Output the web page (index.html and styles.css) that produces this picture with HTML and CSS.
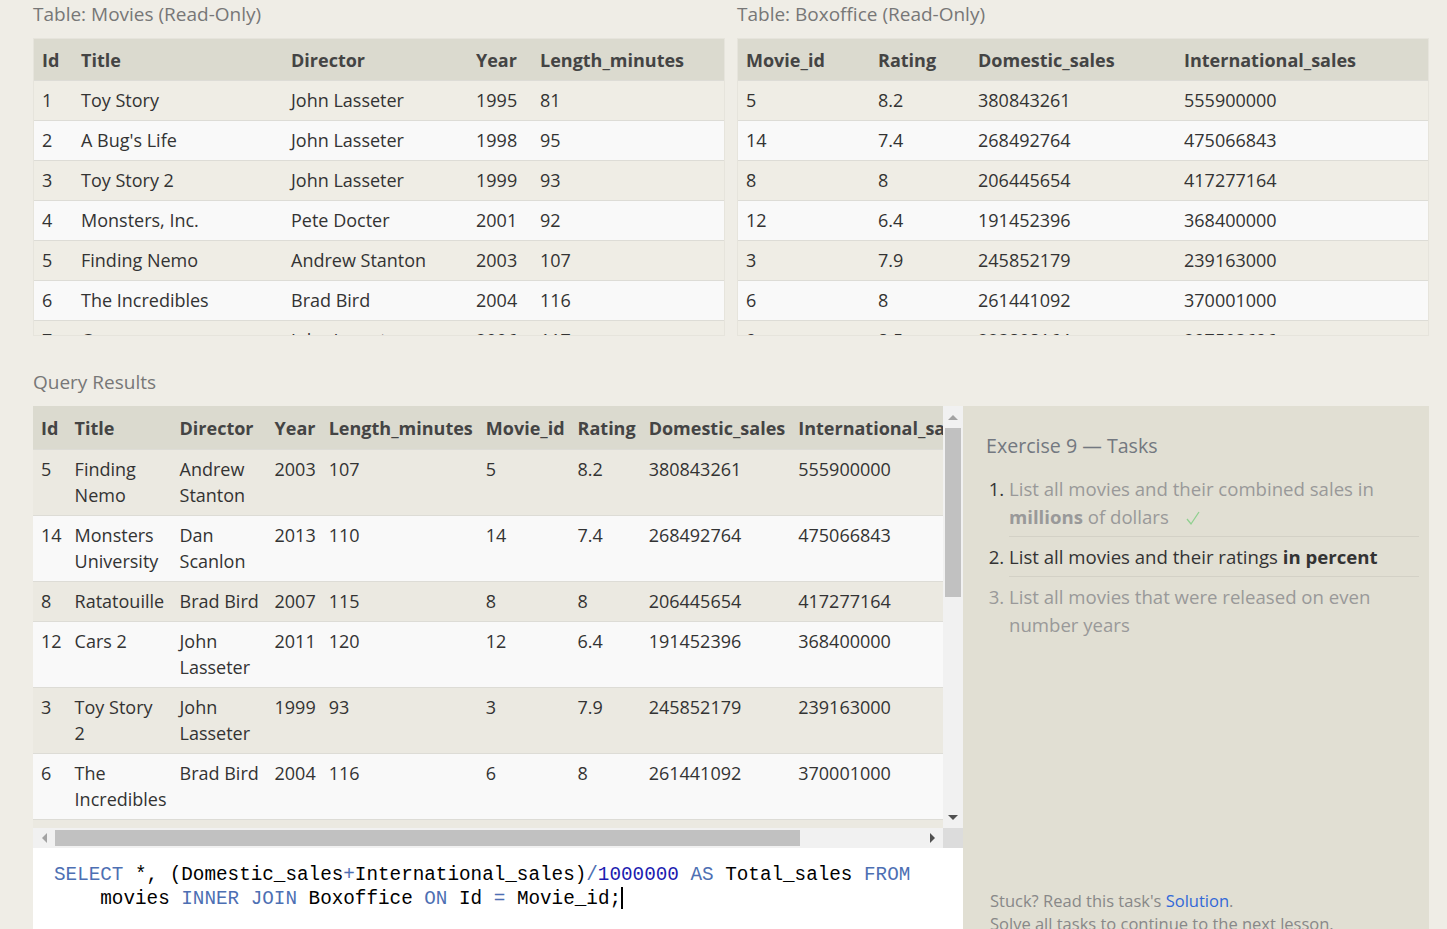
FILE: index.html
```html
<!DOCTYPE html>
<html>
<head>
<meta charset="utf-8">
<link rel="stylesheet" href="styles.css">
</head>
<body>
<div class="page">
  <div class="top">
    <section class="tbl-section">
      <div class="label">Table: Movies (Read-Only)</div>
      <div class="table-box">
        <table class="data fixed">
          <thead><tr><th class="c-id">Id</th><th class="c-title">Title</th><th class="c-dir">Director</th><th class="c-year">Year</th><th>Length_minutes</th></tr></thead>
          <tbody>
            <tr><td>1</td><td>Toy Story</td><td>John Lasseter</td><td>1995</td><td>81</td></tr>
            <tr><td>2</td><td>A Bug's Life</td><td>John Lasseter</td><td>1998</td><td>95</td></tr>
            <tr><td>3</td><td>Toy Story 2</td><td>John Lasseter</td><td>1999</td><td>93</td></tr>
            <tr><td>4</td><td>Monsters, Inc.</td><td>Pete Docter</td><td>2001</td><td>92</td></tr>
            <tr><td>5</td><td>Finding Nemo</td><td>Andrew Stanton</td><td>2003</td><td>107</td></tr>
            <tr><td>6</td><td>The Incredibles</td><td>Brad Bird</td><td>2004</td><td>116</td></tr>
            <tr><td>7</td><td>Cars</td><td>John Lasseter</td><td>2006</td><td>117</td></tr>
            <tr><td>8</td><td>Ratatouille</td><td>Brad Bird</td><td>2007</td><td>115</td></tr>
          </tbody>
        </table>
      </div>
    </section>
    <section class="tbl-section">
      <div class="label">Table: Boxoffice (Read-Only)</div>
      <div class="table-box">
        <table class="data fixed">
          <thead><tr><th class="c-mid">Movie_id</th><th class="c-rating">Rating</th><th class="c-dom">Domestic_sales</th><th>International_sales</th></tr></thead>
          <tbody>
            <tr><td>5</td><td>8.2</td><td>380843261</td><td>555900000</td></tr>
            <tr><td>14</td><td>7.4</td><td>268492764</td><td>475066843</td></tr>
            <tr><td>8</td><td>8</td><td>206445654</td><td>417277164</td></tr>
            <tr><td>12</td><td>6.4</td><td>191452396</td><td>368400000</td></tr>
            <tr><td>3</td><td>7.9</td><td>245852179</td><td>239163000</td></tr>
            <tr><td>6</td><td>8</td><td>261441092</td><td>370001000</td></tr>
            <tr><td>9</td><td>8.5</td><td>223808164</td><td>297503696</td></tr>
            <tr><td>11</td><td>8.4</td><td>415004880</td><td>648167031</td></tr>
          </tbody>
        </table>
      </div>
    </section>
  </div>

  <div class="label query-label">Query Results</div>

  <div class="bottom">
    <div class="results-col">
      <div class="results-grid">
        <div class="viewport">
          <table class="data results">
            <thead><tr><th>Id</th><th>Title</th><th class="r-dir">Director</th><th>Year</th><th>Length_minutes</th><th>Movie_id</th><th>Rating</th><th>Domestic_sales</th><th>International_sales</th><th>Total_sales</th></tr></thead>
            <tbody>
              <tr><td>5</td><td>Finding Nemo</td><td>Andrew Stanton</td><td>2003</td><td>107</td><td>5</td><td>8.2</td><td>380843261</td><td>555900000</td><td>936</td></tr>
              <tr><td>14</td><td>Monsters University</td><td>Dan Scanlon</td><td>2013</td><td>110</td><td>14</td><td>7.4</td><td>268492764</td><td>475066843</td><td>743</td></tr>
              <tr><td>8</td><td>Ratatouille</td><td>Brad Bird</td><td>2007</td><td>115</td><td>8</td><td>8</td><td>206445654</td><td>417277164</td><td>623</td></tr>
              <tr><td>12</td><td>Cars 2</td><td>John Lasseter</td><td>2011</td><td>120</td><td>12</td><td>6.4</td><td>191452396</td><td>368400000</td><td>559</td></tr>
              <tr><td>3</td><td>Toy Story 2</td><td>John Lasseter</td><td>1999</td><td>93</td><td>3</td><td>7.9</td><td>245852179</td><td>239163000</td><td>485</td></tr>
              <tr><td>6</td><td>The Incredibles</td><td>Brad Bird</td><td>2004</td><td>116</td><td>6</td><td>8</td><td>261441092</td><td>370001000</td><td>631</td></tr>
              <tr><td>9</td><td>WALL-E</td><td>Andrew Stanton</td><td>2008</td><td>104</td><td>9</td><td>8.5</td><td>223808164</td><td>297503696</td><td>521</td></tr>
              <tr><td>11</td><td>Toy Story 3</td><td>Lee Unkrich</td><td>2010</td><td>103</td><td>11</td><td>8.4</td><td>415004880</td><td>648167031</td><td>1063</td></tr>
            </tbody>
          </table>
        </div>
        <div class="vbar">
          <div class="sb-btn"><span class="tri tri-up"></span></div>
          <div class="vtrack"><div class="vthumb"></div></div>
          <div class="sb-btn"><span class="tri tri-down"></span></div>
        </div>
        <div class="hbar">
          <div class="sb-btn h"><span class="tri tri-left"></span></div>
          <div class="htrack"><div class="hthumb"></div></div>
          <div class="sb-btn h"><span class="tri tri-right"></span></div>
        </div>
        <div class="corner"></div>
      </div>
      <div class="editor"><pre class="code"><span class="kw">SELECT</span> *, (Domestic_sales<span class="op">+</span>International_sales)<span class="op">/</span><span class="num">1000000</span> <span class="kw">AS</span> Total_sales <span class="kw">FROM</span>
    movies <span class="kw">INNER</span> <span class="kw">JOIN</span> Boxoffice <span class="kw">ON</span> Id <span class="op">=</span> Movie_id;<span class="cursor"></span></pre></div>
    </div>

    <aside class="tasks">
      <h2 class="tasks-title">Exercise 9 — Tasks</h2>
      <ol class="task-list">
        <li class="done"><span class="txt">List all movies and their combined sales in <b>millions</b> of dollars</span><svg class="check" width="16" height="16" viewBox="0 0 16 16"><polyline points="2,9 6,14 14,2" fill="none" stroke="#8fd08f" stroke-width="1.3"/></svg></li>
        <li class="current">List all movies and their ratings <b>in percent</b></li>
        <li class="todo">List all movies that were released on even number years</li>
      </ol>
      <div class="tasks-foot">
        <div>Stuck? Read this task's <a class="sol">Solution</a>.</div>
        <div>Solve all tasks to continue to the next lesson.</div>
      </div>
    </aside>
  </div>
</div>
</body>
</html>
```

FILE: styles.css
```css
html, body {
  margin: 0;
  padding: 0;
  background: #efede6;
  font-family: "Open Sans", "Noto Sans", sans-serif;
  font-size: 18px;
  color: #333;
  overflow: hidden;
}

.page {
  padding: 0 18px 0 33px;
}

.top {
  display: grid;
  grid-template-columns: 692px 692px;
  column-gap: 12px;
}

.label {
  color: #777;
  font-size: 19px;
  line-height: 28px;
  height: 38px;
}

.table-box {
  height: 298px;
  overflow: hidden;
  border: 1px solid #e6e4dc;
  box-sizing: border-box;
}

table.data {
  border-collapse: collapse;
  width: 100%;
}

table.fixed {
  table-layout: fixed;
}

table.data th {
  background: #dbdacf;
  color: #444;
  font-weight: 700;
  text-align: left;
  height: 41px;
  padding: 0 8px;
  line-height: 26px;
  white-space: nowrap;
  vertical-align: middle;
}

table.data td {
  padding: 6px 8px 7px;
  line-height: 26px;
  border-top: 1px solid #dddcd6;
  vertical-align: top;
  color: #333;
}

table.data tbody tr:nth-child(odd) td {
  background: #efede5;
}

table.data tbody tr:nth-child(even) td {
  background: #f9f9f9;
}

.c-id { width: 23px; }
.c-title { width: 194px; }
.c-dir { width: 169px; }
.c-year { width: 48px; }
.c-mid { width: 116px; }
.c-rating { width: 84px; }
.c-dom { width: 190px; }

.query-label {
  height: auto;
  padding: 32px 0 10px;
}

.bottom {
  display: grid;
  grid-template-columns: 930px 466px;
  align-items: stretch;
}

.results-col {
  display: flex;
  flex-direction: column;
}

.results-grid {
  display: grid;
  grid-template-columns: 910px 20px;
  grid-template-rows: 422px 20px;
}

.viewport {
  overflow: hidden;
  background: #e9e7df;
}

table.results {
  width: 100%;
}

table.results th {
  height: 43px;
  padding: 0 5px 0 8px;
}

table.results td {
  padding: 6px 5px 7px 8px;
}

table.results th.r-dir {
  width: 82px;
  min-width: 82px;
}

table.results tbody tr:nth-child(odd) td {
  background: #ebe9e1;
}

.vbar {
  background: #f1f1f1;
  display: flex;
  flex-direction: column;
}

.sb-btn {
  height: 22px;
  flex: none;
  display: flex;
  align-items: center;
  justify-content: center;
}

.sb-btn.h {
  height: auto;
  width: 22px;
}

.vtrack {
  flex: 1;
  display: flex;
  flex-direction: column;
}

.vthumb {
  height: 169px;
  margin: 0 2px;
  background: #c1c1c1;
}

.hbar {
  background: #f1f1f1;
  display: flex;
}

.htrack {
  flex: 1;
  display: flex;
  align-items: center;
}

.hthumb {
  width: 745px;
  height: 16px;
  background: #c1c1c1;
}

.corner {
  background: #dcdcdc;
}

.tri {
  width: 0;
  height: 0;
  display: block;
}

.tri-up {
  border-left: 5px solid transparent;
  border-right: 5px solid transparent;
  border-bottom: 5px solid #a3a3a3;
}

.tri-down {
  border-left: 5px solid transparent;
  border-right: 5px solid transparent;
  border-top: 5px solid #505050;
}

.tri-left {
  border-top: 5px solid transparent;
  border-bottom: 5px solid transparent;
  border-right: 5px solid #a3a3a3;
}

.tri-right {
  border-top: 5px solid transparent;
  border-bottom: 5px solid transparent;
  border-left: 5px solid #505050;
}

.editor {
  background: #ffffff;
  height: 100px;
  padding: 15px 0 0 21px;
  box-sizing: border-box;
}

.code {
  margin: 0;
  font-family: "Liberation Mono", "DejaVu Sans Mono", monospace;
  font-size: 19.3px;
  line-height: 24px;
  color: #000;
}

.kw { color: #4d6fb3; }
.op { color: #4d6fb3; }
.num { color: #1b1bb0; }

.cursor {
  display: inline-block;
  width: 2px;
  height: 22px;
  background: #000;
  vertical-align: -5px;
}

.tasks {
  background: #e1dfd3;
  display: flex;
  flex-direction: column;
  padding: 0 10px 13px 0;
}

.tasks-title {
  margin: 25px 0 14px 23px;
  font-weight: 400;
  font-size: 19.6px;
  line-height: 30px;
  color: #737880;
}

.task-list {
  margin: 0;
  padding: 0 0 0 46px;
  font-size: 18.6px;
  line-height: 28px;
}

.task-list li {
  padding: 0 0 5px;
  margin-bottom: 6px;
  border-bottom: 1px solid #d3d1c6;
}

.task-list li:last-child {
  border-bottom: none;
}

.task-list li.done {
  color: #999;
}

.task-list li.done::marker {
  color: #333;
}

.task-list li.current {
  color: #333;
}

.task-list li.todo {
  color: #999;
}

.check {
  margin-left: 16px;
  vertical-align: -2px;
}

.tasks-foot {
  margin-top: auto;
  padding-left: 27px;
  font-size: 16.5px;
  line-height: 23px;
  color: #888;
}

.sol {
  color: #3268d8;
}
```
